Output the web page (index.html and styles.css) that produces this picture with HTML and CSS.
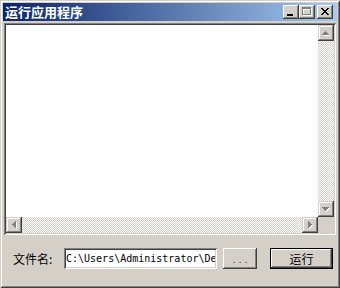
FILE: index.html
```html
<!DOCTYPE html>
<html>
<head>
<meta charset="utf-8">
<link rel="stylesheet" href="styles.css">
</head>
<body>
<div class="window">
  <div class="titlebar">
    <span class="title">运行应用程序</span>
    <div class="caption-btns">
      <div class="cbtn"><svg width="16" height="14" shape-rendering="crispEdges"><rect x="4" y="9" width="6" height="2" fill="#000"/></svg></div>
      <div class="cbtn"><svg width="16" height="14" shape-rendering="crispEdges">
        <g fill="#fff"><rect x="4" y="3" width="9" height="2"/><rect x="4" y="3" width="1" height="8"/><rect x="12" y="3" width="1" height="8"/><rect x="4" y="10" width="9" height="1"/></g>
        <g fill="#808080"><rect x="3" y="2" width="9" height="2"/><rect x="3" y="2" width="1" height="8"/><rect x="11" y="2" width="1" height="8"/><rect x="3" y="9" width="9" height="1"/></g>
      </svg></div>
      <div class="cbtn close"><svg width="16" height="14" shape-rendering="crispEdges"><g fill="#000">
        <rect x="4" y="3" width="2" height="1"/><rect x="10" y="3" width="2" height="1"/>
        <rect x="5" y="4" width="2" height="1"/><rect x="9" y="4" width="2" height="1"/>
        <rect x="6" y="5" width="4" height="1"/>
        <rect x="7" y="6" width="2" height="1"/>
        <rect x="6" y="7" width="4" height="1"/>
        <rect x="5" y="8" width="2" height="1"/><rect x="9" y="8" width="2" height="1"/>
        <rect x="4" y="9" width="2" height="1"/><rect x="10" y="9" width="2" height="1"/>
      </g></svg></div>
    </div>
  </div>
  <div class="listbox">
    <div class="content"></div>
    <div class="vscroll">
      <div class="sbtn"><svg width="16" height="16" shape-rendering="crispEdges">
        <g fill="#fff"><rect x="8" y="7" width="1" height="1"/><rect x="7" y="8" width="3" height="1"/><rect x="6" y="9" width="5" height="1"/><rect x="5" y="10" width="7" height="1"/></g>
        <g fill="#808080"><rect x="7" y="6" width="1" height="1"/><rect x="6" y="7" width="3" height="1"/><rect x="5" y="8" width="5" height="1"/><rect x="4" y="9" width="7" height="1"/></g>
      </svg></div>
      <div class="track"></div>
      <div class="sbtn"><svg width="16" height="16" shape-rendering="crispEdges">
        <g fill="#fff"><rect x="5" y="7" width="7" height="1"/><rect x="6" y="8" width="5" height="1"/><rect x="7" y="9" width="3" height="1"/><rect x="8" y="10" width="1" height="1"/></g>
        <g fill="#808080"><rect x="4" y="6" width="7" height="1"/><rect x="5" y="7" width="5" height="1"/><rect x="6" y="8" width="3" height="1"/><rect x="7" y="9" width="1" height="1"/></g>
      </svg></div>
    </div>
    <div class="hscroll">
      <div class="sbtn"><svg width="16" height="16" shape-rendering="crispEdges">
        <g fill="#fff"><rect x="7" y="8" width="1" height="1"/><rect x="8" y="7" width="1" height="3"/><rect x="9" y="6" width="1" height="5"/><rect x="10" y="5" width="1" height="7"/></g>
        <g fill="#808080"><rect x="6" y="7" width="1" height="1"/><rect x="7" y="6" width="1" height="3"/><rect x="8" y="5" width="1" height="5"/><rect x="9" y="4" width="1" height="7"/></g>
      </svg></div>
      <div class="track"></div>
      <div class="sbtn"><svg width="16" height="16" shape-rendering="crispEdges">
        <g fill="#fff"><rect x="7" y="5" width="1" height="7"/><rect x="8" y="6" width="1" height="5"/><rect x="9" y="7" width="1" height="3"/><rect x="10" y="8" width="1" height="1"/></g>
        <g fill="#808080"><rect x="6" y="4" width="1" height="7"/><rect x="7" y="5" width="1" height="5"/><rect x="8" y="6" width="1" height="3"/><rect x="9" y="7" width="1" height="1"/></g>
      </svg></div>
    </div>
    <div class="corner"></div>
  </div>
  <div class="bottom-row">
    <span class="label">文件名:</span>
    <div class="field"><span class="field-text">C:\Users\Administrator\Desktop</span></div>
    <div class="btn browse">...</div>
    <div class="btn run">运行</div>
  </div>
</div>
</body>
</html>
```

FILE: styles.css
```css
html, body {
  margin: 0;
  padding: 0;
  background: #d4d0c8;
}

.window {
  width: 340px;
  height: 288px;
  box-sizing: border-box;
  padding: 3px;
  background: #d4d0c8;
  box-shadow: inset 1px 1px #d4d0c8, inset -1px -1px #404040, inset 2px 2px #fff, inset -2px -2px #808080;
  display: flex;
  flex-direction: column;
  font-family: "Noto Sans CJK SC", "Liberation Sans", sans-serif;
}

.titlebar {
  height: 18px;
  flex: none;
  display: flex;
  align-items: center;
  padding: 0 4px 0 2px;
  background: linear-gradient(to right, #0a246a, #a6caf0);
}

.title {
  color: #fff;
  font-weight: bold;
  font-size: 13px;
  line-height: 18px;
}

.caption-btns {
  margin-left: auto;
  display: flex;
}

.cbtn {
  width: 16px;
  height: 14px;
  background: #d4d0c8;
  box-shadow: inset -1px -1px #404040, inset 1px 1px #fff, inset -2px -2px #808080;
}

.cbtn svg { display: block; }

.cbtn.close { margin-left: 2px; }

.listbox {
  flex: none;
  height: 212px;
  margin: 2px 1px 0 1px;
  padding: 2px;
  box-sizing: border-box;
  box-shadow: inset 1px 1px #808080, inset -1px -1px #fff, inset 2px 2px #404040, inset -2px -2px #d4d0c8;
  display: grid;
  grid-template-columns: 1fr 16px;
  grid-template-rows: 1fr 16px;
}

.content { background: #fff; }

.vscroll {
  display: flex;
  flex-direction: column;
}

.hscroll {
  display: flex;
}

.track {
  flex: 1;
  background: repeating-conic-gradient(#fff 0 25%, #d4d0c8 0 50%) 0 0 / 2px 2px;
}

.sbtn {
  width: 16px;
  height: 16px;
  flex: none;
  background: #d4d0c8;
  box-shadow: inset -1px -1px #404040, inset 1px 1px #d4d0c8, inset -2px -2px #808080, inset 2px 2px #fff;
}

.sbtn svg { display: block; }

.corner { background: #d4d0c8; }

.bottom-row {
  display: flex;
  align-items: center;
  margin-top: 13px;
  height: 21px;
}

.label {
  width: 51px;
  margin-left: 10px;
  font-size: 12px;
  color: #000;
  white-space: nowrap;
}

.field {
  width: 153px;
  height: 21px;
  box-sizing: border-box;
  padding: 2px 2px 0 2px;
  background: #fff;
  box-shadow: inset 1px 1px #808080, inset -1px -1px #fff, inset 2px 2px #404040, inset -2px -2px #d4d0c8;
  overflow: hidden;
}

.field-text {
  display: block;
  overflow: hidden;
  white-space: nowrap;
  font-family: "DejaVu Sans Mono", "Liberation Mono", monospace;
  font-size: 10px;
  line-height: 17px;
  color: #000;
}

.btn {
  height: 21px;
  box-sizing: border-box;
  display: flex;
  align-items: center;
  justify-content: center;
  font-size: 12px;
  color: #000;
  background: #d4d0c8;
}

.browse {
  width: 34px;
  margin-left: 6px;
  box-shadow: inset -1px -1px #404040, inset 1px 1px #fff, inset -2px -2px #808080;
  font-family: "Liberation Sans", sans-serif;
  font-size: 11px;
  letter-spacing: 3px;
  padding-left: 3px;
  color: #404040;
}

.run {
  width: 63px;
  margin-left: 13px;
  border: 1px solid #000;
  box-shadow: inset -1px -1px #404040, inset 1px 1px #fff, inset -2px -2px #808080;
}
```
